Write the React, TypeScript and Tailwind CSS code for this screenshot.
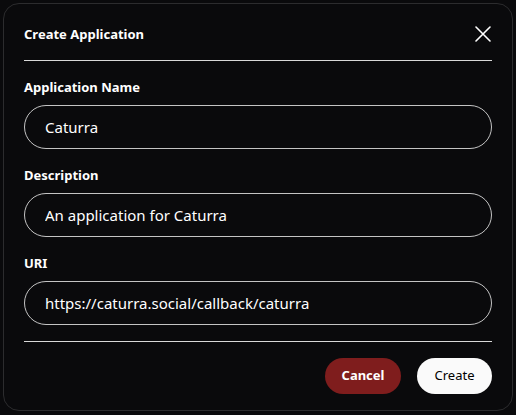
import { useState } from 'react'

const fields = [
  { label: 'Application Name', value: 'Caturra' },
  { label: 'Description', value: 'An application for Caturra' },
  { label: 'URI', value: 'https://caturra.social/callback/caturra' },
]

export default function App() {
  const [values, setValues] = useState(fields.map((f) => f.value))

  return (
    <div className="min-h-[415px] bg-[#0a0a0c] p-[3px] font-['Noto_Sans',sans-serif] text-white">
      <div className="rounded-2xl border border-[#2c2c2e] bg-[#0a0a0c] px-5 pt-5 pb-4">
        {/* Header */}
        <div className="flex items-center justify-between border-b border-[#d9d9d9] pb-4">
          <h2 className="text-[13px] leading-5 font-bold">Create Application</h2>
          <button className="-mr-[1px] flex h-5 w-5 items-center justify-center text-white">
            <svg width="16" height="16" viewBox="0 0 16 16" fill="none" stroke="currentColor" strokeWidth="1.6" strokeLinecap="round">
              <path d="M1 1 L15 15 M15 1 L1 15" />
            </svg>
          </button>
        </div>

        {/* Fields */}
        <div className="flex flex-col gap-4 border-b border-[#d9d9d9] pt-4 pb-4">
          {fields.map((f, i) => (
            <div key={f.label} className="flex flex-col gap-2">
              <label className="text-[13px] leading-5 font-bold">{f.label}</label>
              <input
                value={values[i]}
                onChange={(e) => setValues(values.map((v, j) => (j === i ? e.target.value : v)))}
                className="h-11 rounded-full border border-[#c4c4c4] bg-transparent px-5 text-[15px] text-white outline-none"
              />
            </div>
          ))}
        </div>

        {/* Footer */}
        <div className="flex justify-end gap-4 pt-4">
          <button className="h-9 w-[76px] rounded-full bg-[#7f1d1d] text-[13px] font-bold text-white">Cancel</button>
          <button className="h-9 w-[75px] rounded-full bg-[#fafafa] text-[13px] text-black">Create</button>
        </div>
      </div>
    </div>
  )
}
